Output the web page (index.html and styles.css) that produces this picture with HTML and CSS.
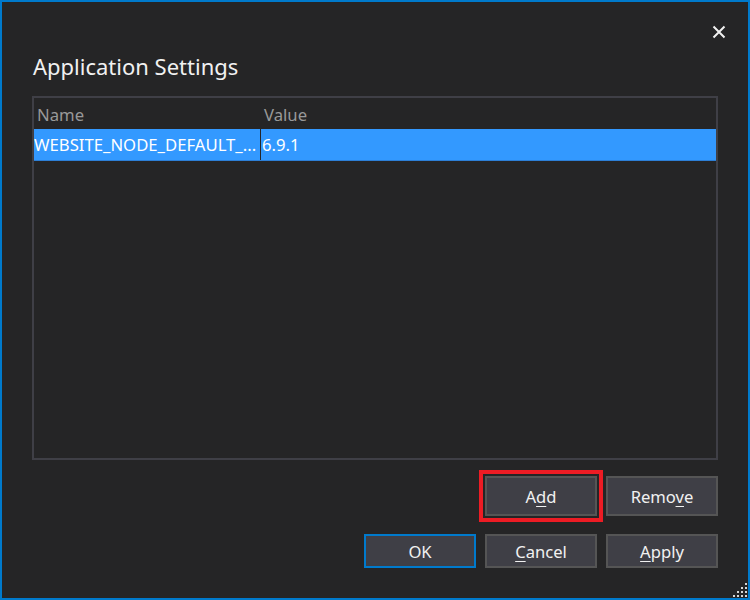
FILE: index.html
```html
<!DOCTYPE html>
<html lang="en">
<head>
<meta charset="utf-8">
<title>Application Settings</title>
<link rel="stylesheet" href="styles.css">
</head>
<body>
<div class="window">
  <div class="top">
    <button class="close" aria-label="Close">
      <svg width="14" height="14" viewBox="0 0 14 14"><path d="M1.5 1.5 L12.5 12.5 M12.5 1.5 L1.5 12.5" stroke="#f1f1f1" stroke-width="2" fill="none"/></svg>
    </button>
  </div>
  <h1 class="title">Application Settings</h1>
  <div class="list">
    <div class="list-head">
      <div class="cell head-name">Name</div>
      <div class="divider head-div"></div>
      <div class="cell head-value">Value</div>
    </div>
    <div class="list-row selected">
      <div class="cell row-name">WEBSITE_NODE_DEFAULT_...</div>
      <div class="divider"></div>
      <div class="cell row-value">6.9.1</div>
    </div>
  </div>
  <div class="btn-row row-1">
    <button class="btn tall highlighted">A<u>d</u>d</button>
    <button class="btn tall">Remo<u>v</u>e</button>
  </div>
  <div class="btn-row row-2">
    <button class="btn default">OK</button>
    <button class="btn"><u>C</u>ancel</button>
    <button class="btn"><u>A</u>pply</button>
  </div>
  <svg class="grip" width="18" height="18" viewBox="0 0 18 18">
    <g fill="#d6d6d6">
      <rect x="15" y="3" width="2" height="2"/>
      <rect x="11" y="7" width="2" height="2"/><rect x="15" y="7" width="2" height="2"/>
      <rect x="7" y="11" width="2" height="2"/><rect x="11" y="11" width="2" height="2"/><rect x="15" y="11" width="2" height="2"/>
      <rect x="3" y="15" width="2" height="2"/><rect x="7" y="15" width="2" height="2"/><rect x="11" y="15" width="2" height="2"/><rect x="15" y="15" width="2" height="2"/>
    </g>
  </svg>
</div>
</body>
</html>
```

FILE: styles.css
```css
html, body {
  margin: 0;
  padding: 0;
  background: #252526;
}

.window {
  position: relative;
  width: 750px;
  height: 600px;
  box-sizing: border-box;
  border: 2px solid #007acc;
  background: #252526;
  font-family: "Noto Sans", "Open Sans", "DejaVu Sans", sans-serif;
  color: #f1f1f1;
  display: flex;
  flex-direction: column;
}

.top {
  height: 40px;
  display: flex;
  justify-content: flex-end;
  align-items: flex-start;
  padding: 23px 22px 0 0;
  box-sizing: border-box;
}

.close {
  width: 14px;
  height: 14px;
  padding: 0;
  margin: 0;
  border: 0;
  background: transparent;
  display: block;
}

.close svg {
  display: block;
}

.title {
  margin: 10px 0 16px 31px;
  font-size: 22px;
  line-height: 28px;
  font-weight: normal;
  color: #f1f1f1;
}

.list {
  margin: 0 30px;
  height: 364px;
  box-sizing: border-box;
  border: 2px solid #3f3f46;
  background: #252526;
}

.list-head,
.list-row {
  display: grid;
  grid-template-columns: 226px 1px 1fr;
}

.list-head {
  height: 31px;
  align-items: center;
  color: #999999;
  font-size: 16.7px;
}

.head-name {
  padding-left: 3px;
  padding-top: 2px;
}

.head-value {
  padding-left: 3px;
  padding-top: 2px;
}

.list-row {
  height: 32px;
  box-sizing: border-box;
  font-size: 16.7px;
  color: #ffffff;
}

.list-row.selected {
  background: #3399ff;
  border-bottom: 1px solid #2d7fd6;
}

.cell {
  white-space: nowrap;
  overflow: hidden;
  display: flex;
  align-items: center;
}

.row-name {
  padding-left: 0;
}

.row-value {
  padding-left: 1px;
}

.divider {
  background: #252526;
}

.head-div {
  background: transparent;
}

.btn-row {
  display: flex;
  justify-content: flex-end;
  gap: 9px;
  margin: 0 30px;
}

.row-1 {
  margin-top: 16px;
}

.row-2 {
  margin-top: 18px;
}

.btn {
  width: 112px;
  height: 34px;
  box-sizing: border-box;
  border: 2px solid #555555;
  background: #3f3f46;
  color: #f1f1f1;
  font-family: "Noto Sans", "Open Sans", "DejaVu Sans", sans-serif;
  font-size: 16.6px;
  padding: 0;
  margin: 0;
}

.btn.tall {
  height: 40px;
}

.btn.default {
  border-color: #007acc;
}

.btn.highlighted {
  outline: 4px solid #ed1c24;
  outline-offset: 2px;
}

.btn u {
  text-underline-offset: 3px;
}

.grip {
  position: absolute;
  right: 0;
  bottom: 0;
}
```
